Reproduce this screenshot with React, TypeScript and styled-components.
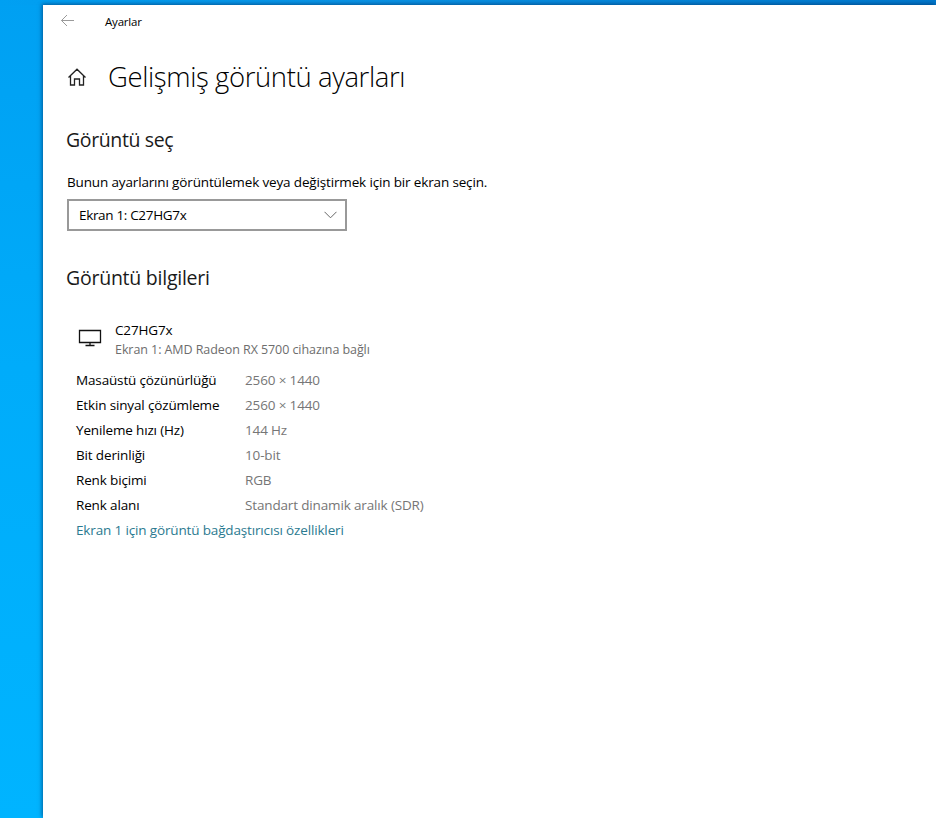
import React from 'react';
import styled, { createGlobalStyle } from 'styled-components';

const GlobalStyle = createGlobalStyle`
  html, body {
    margin: 0;
    padding: 0;
    height: 100%;
    overflow: hidden;
  }
  body {
    font-family: "Open Sans", "Noto Sans", "Liberation Sans", sans-serif;
  }
`;

const Desktop = styled.div`
  width: 936px;
  height: 818px;
  box-sizing: border-box;
  padding: 5px 0 0 43px;
  background:
    linear-gradient(90deg, #00a0f2 0%, #0a94e6 40%, #0078cc 100%) top / 100% 5px no-repeat,
    linear-gradient(180deg, #00a0f2 0%, #00acfa 45%, #00b4ff 100%);
  overflow: hidden;
`;

const Window = styled.div`
  height: 813px;
  background: #fff;
  box-shadow: -1px -1px 4px rgba(0, 40, 90, 0.6);
  color: #000;
`;

const TitleBar = styled.div`
  display: flex;
  align-items: center;
  height: 32px;
  padding-left: 17px;
`;

const BackIcon = styled.svg`
  width: 15px;
  height: 13px;
  margin-top: -1px;
  fill: none;
  stroke: #9a9a9a;
  stroke-width: 1;
`;

const AppName = styled.span`
  margin-left: 30px;
  font-size: 11.5px;
  letter-spacing: -0.2px;
`;

const Content = styled.div`
  padding: 0 0 0 23px;
`;

const PageHeader = styled.div`
  display: flex;
  align-items: center;
  height: 40px;
  margin-top: 20px;
`;

const HomeIcon = styled.svg`
  width: 18px;
  height: 18px;
  margin: 0 22px 0 2px;
  fill: none;
  stroke: #222;
  stroke-width: 1.3;
`;

const PageTitle = styled.h1`
  margin: 0;
  font-size: 27.5px;
  font-weight: 300;
  letter-spacing: -0.4px;
  line-height: 40px;
`;

const SectionTitle = styled.h2<{ $top: number; $spacing: number }>`
  margin: ${p => p.$top}px 0 0;
  font-size: 19.5px;
  font-weight: 400;
  letter-spacing: ${p => p.$spacing}px;
  line-height: 26px;
  color: #1a1a1a;
`;

const Hint = styled.p`
  margin: 20px 0 0 1px;
  font-size: 13.5px;
  letter-spacing: -0.15px;
  line-height: 18px;
`;

const Select = styled.div`
  display: flex;
  align-items: center;
  justify-content: space-between;
  box-sizing: border-box;
  width: 280px;
  height: 32px;
  margin: 8px 0 0 1px;
  padding: 0 8px 0 10px;
  border: 2px solid #999;
  font-size: 13.5px;
  letter-spacing: -0.33px;
`;

const Chevron = styled.svg`
  width: 13px;
  height: 8px;
  fill: none;
  stroke: #666;
  stroke-width: 1;
`;

const Device = styled.div`
  display: flex;
  align-items: flex-start;
  margin: 30px 0 0 12px;
`;

const MonitorIcon = styled.svg`
  width: 24px;
  height: 18px;
  margin: 8px 13px 0 0;
  fill: none;
  stroke: #111;
  stroke-width: 1.3;
`;

const DeviceName = styled.div`
  font-size: 13.5px;
  letter-spacing: -0.15px;
  line-height: 19px;
`;

const DeviceSub = styled.div`
  font-size: 12.5px;
  letter-spacing: -0.07px;
  line-height: 19px;
  color: #6d6d6d;
`;

const InfoList = styled.div`
  display: grid;
  grid-template-columns: 169px auto;
  grid-auto-rows: 25px;
  align-items: center;
  justify-content: start;
  margin: 8px 0 0 10px;
  font-size: 13.5px;
  letter-spacing: -0.15px;
`;

const InfoValue = styled.span`
  color: #767676;
`;

const DetailLink = styled.a`
  display: block;
  margin: 1px 0 0 10px;
  font-size: 13.5px;
  letter-spacing: -0.15px;
  line-height: 25px;
  color: #2b7a90;
`;

const rows = [
  ['Masaüstü çözünürlüğü', '2560 × 1440'],
  ['Etkin sinyal çözümleme', '2560 × 1440'],
  ['Yenileme hızı (Hz)', '144 Hz'],
  ['Bit derinliği', '10-bit'],
  ['Renk biçimi', 'RGB'],
  ['Renk alanı', 'Standart dinamik aralık (SDR)'],
];

export default function App() {
  return (
    <Desktop>
      <GlobalStyle />
      <Window>
        <TitleBar>
          <BackIcon viewBox="0 0 15 13">
            <path d="M14 6.5H1.5M7 1 1.5 6.5 7 12" />
          </BackIcon>
          <AppName>Ayarlar</AppName>
        </TitleBar>
        <Content>
          <PageHeader>
            <HomeIcon viewBox="0 0 18 18">
              <path d="M.5 9.5 9 1.2 17.5 9.5M2.5 7.5V17H6.5V11H11.5V17H15.5V7.5" />
            </HomeIcon>
            <PageTitle>Gelişmiş görüntü ayarları</PageTitle>
          </PageHeader>
          <SectionTitle $top={30} $spacing={-0.38}>Görüntü seç</SectionTitle>
          <Hint>Bunun ayarlarını görüntülemek veya değiştirmek için bir ekran seçin.</Hint>
          <Select>
            Ekran 1: C27HG7x
            <Chevron viewBox="0 0 13 8">
              <path d="M.5.8 6.5 6.8 12.5.8" />
            </Chevron>
          </Select>
          <SectionTitle $top={34} $spacing={-0.24}>Görüntü bilgileri</SectionTitle>
          <Device>
            <MonitorIcon viewBox="0 0 24 18">
              <path d="M1.5 1.5H22.5V13.5H1.5ZM12 13.5V16.5M7.5 16.5H16.5" />
            </MonitorIcon>
            <div>
              <DeviceName>C27HG7x</DeviceName>
              <DeviceSub>Ekran 1: AMD Radeon RX 5700 cihazına bağlı</DeviceSub>
            </div>
          </Device>
          <InfoList>
            {rows.map(([label, value]) => (
              <React.Fragment key={label}>
                <span>{label}</span>
                <InfoValue>{value}</InfoValue>
              </React.Fragment>
            ))}
          </InfoList>
          <DetailLink>Ekran 1 için görüntü bağdaştırıcısı özellikleri</DetailLink>
        </Content>
      </Window>
    </Desktop>
  );
}
